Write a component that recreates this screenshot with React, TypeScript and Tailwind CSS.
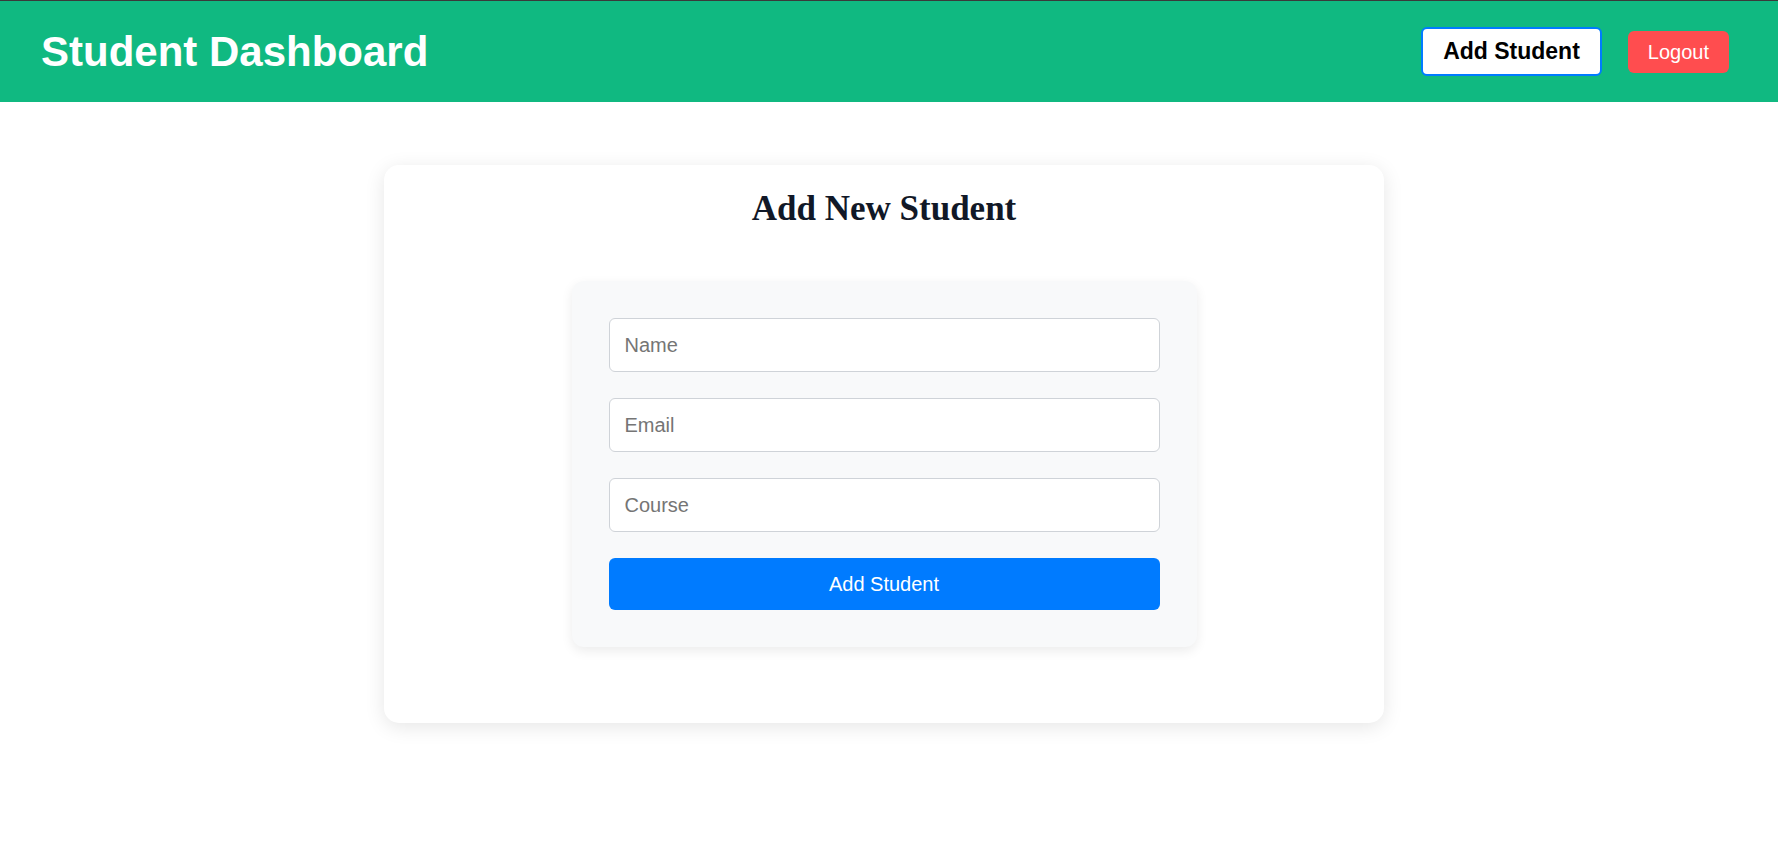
import React from "react";

export default function App() {
  return (
    <div className="min-h-[850px] bg-white font-['Liberation_Sans',Arial,sans-serif]">
      <header className="flex h-[102px] items-center justify-between border-t border-[#3a3a3a] bg-[#10b981] pl-[41px] pr-[49px]">
        <h1 className="text-[42px] font-bold leading-[48px] text-white">Student Dashboard</h1>
        <div className="flex items-center gap-[26px]">
          <button className="h-[49px] rounded-[6px] border-2 border-[#007bff] bg-white px-5 text-[23px] font-bold text-black">
            Add Student
          </button>
          <button className="h-[42px] rounded-[6px] bg-[#ff4d4f] px-5 text-[20px] text-white">
            Logout
          </button>
        </div>
      </header>

      <main className="flex justify-center pr-[10px] pt-[63px]">
        <div className="flex w-[1000px] flex-col items-center rounded-[15px] bg-white pb-[24px] pt-[24px] shadow-[0_4px_20px_rgba(0,0,0,0.1)]">
          <h2 className="font-['Liberation_Serif','Times_New_Roman',serif] text-[35px] font-bold leading-[40px] text-[#111827]">
            Add New Student
          </h2>
          <form
            className="mb-[52px] mt-[52px] flex w-[625px] flex-col gap-[26px] rounded-xl bg-[#f8f9fa] p-[37px] shadow-[0_4px_12px_rgba(0,0,0,0.08)]"
            onSubmit={(e) => e.preventDefault()}
          >
            <input
              type="text"
              placeholder="Name"
              className="h-[54px] w-full rounded-[6px] border border-[#cfd3d8] bg-white px-[15px] text-[20px] text-[#333] placeholder:text-[#757575] outline-none"
            />
            <input
              type="email"
              placeholder="Email"
              className="h-[54px] w-full rounded-[6px] border border-[#cfd3d8] bg-white px-[15px] text-[20px] text-[#333] placeholder:text-[#757575] outline-none"
            />
            <input
              type="text"
              placeholder="Course"
              className="h-[54px] w-full rounded-[6px] border border-[#cfd3d8] bg-white px-[15px] text-[20px] text-[#333] placeholder:text-[#757575] outline-none"
            />
            <button
              type="submit"
              className="h-[52px] w-full rounded-[6px] bg-[#007bff] text-[20px] text-white"
            >
              Add Student
            </button>
          </form>
        </div>
      </main>
    </div>
  );
}
